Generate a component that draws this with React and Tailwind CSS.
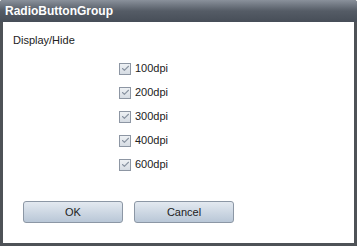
import { Check } from 'lucide-react'

const options = ['100dpi', '200dpi', '300dpi', '400dpi', '600dpi']

export default function App() {
    return (
        <div className="w-[357px] h-[246px] bg-[#4e5257] flex flex-col rounded-t-[3px] overflow-hidden"
            style={{ fontFamily: '"Liberation Sans", Arial, sans-serif' }}>

            {/* Title bar */}
            <div className="h-[22px] shrink-0 flex items-center px-[5px] bg-gradient-to-b from-[#8a919b] via-[#555c66] to-[#474e58]">
                <span className="text-white font-bold text-[12px] leading-none">RadioButtonGroup</span>
            </div>

            {/* Body */}
            <div className="flex-1 mx-[3px] mb-[3px] bg-white flex flex-col">
                <p className="text-[11px] text-[#222] pl-[10px] pt-[11px] leading-[14px]">Display/Hide</p>

                <div className="flex flex-col gap-[11px] pl-[116px] pt-[15px]">
                    {options.map(label => (
                        <label key={label} className="flex items-center gap-[4px] h-[13px]">
                            <span className="w-[12px] h-[12px] border border-[#8d96a3] bg-gradient-to-b from-[#eef1f4] to-[#d6dce3] flex items-center justify-center">
                                <Check size={9} strokeWidth={3} className="text-[#8a94a2]" />
                            </span>
                            <span className="text-[11px] text-[#222] leading-none">{label}</span>
                        </label>
                    ))}
                </div>

                <div className="flex gap-[11px] pl-[20px] pt-[30px]">
                    {['OK', 'Cancel'].map(b => (
                        <button key={b}
                            className="w-[100px] h-[22px] rounded-[3px] border border-[#8c97a5] bg-gradient-to-b from-[#e3e9f0] to-[#b9c7d7] text-[11px] text-[#222]">
                            {b}
                        </button>
                    ))}
                </div>
            </div>
        </div>
    )
}
